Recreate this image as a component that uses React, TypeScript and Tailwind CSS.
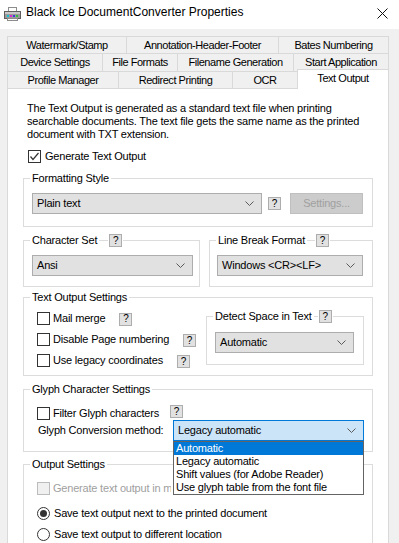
import React from "react";

function Help({ className = "" }: { className?: string }) {
  return (
    <div
      className={`w-[13px] h-[13px] shrink-0 border border-[#adadad] bg-[#e1e1e1] flex items-center justify-center text-[10px] leading-none text-black tracking-normal ${className}`}
    >
      ?
    </div>
  );
}

function Chevron() {
  return (
    <svg width="9" height="5" viewBox="0 0 9 5" className="shrink-0">
      <path d="M0.5 0.5 L4.5 4.5 L8.5 0.5" fill="none" stroke="#5a5a5a" strokeWidth="1" />
    </svg>
  );
}

function Combo({ text, className = "" }: { text: string; className?: string }) {
  return (
    <div
      className={`h-[21px] shrink-0 border border-[#adadad] bg-[#e1e1e1] flex items-center justify-between pl-[4px] pr-[7px] ${className}`}
    >
      <span>{text}</span>
      <Chevron />
    </div>
  );
}

function Check({ checked = false, disabled = false }: { checked?: boolean; disabled?: boolean }) {
  return (
    <div
      className={`w-[13px] h-[13px] shrink-0 border flex items-center justify-center ${
        disabled ? "border-[#bcbcbc] bg-[#f0f0f0]" : "border-[#333333] bg-white"
      }`}
    >
      {checked && (
        <svg width="11" height="11" viewBox="0 0 11 11">
          <path d="M1.5 5.5 L4 8.5 L9.5 2" fill="none" stroke="#333333" strokeWidth="1.2" />
        </svg>
      )}
    </div>
  );
}

function Radio({ selected = false }: { selected?: boolean }) {
  return (
    <div className="w-[13px] h-[13px] shrink-0 rounded-full border border-[#333333] bg-white flex items-center justify-center">
      {selected && <div className="w-[7px] h-[7px] rounded-full bg-[#333333]" />}
    </div>
  );
}

function Legend({ label, helpGap }: { label: string; helpGap?: string }) {
  return (
    <div className="absolute -top-[7px] left-[6px] flex items-center leading-[13px]">
      <span className="bg-white px-[2px]">{label}</span>
      {helpGap && (
        <div className={`bg-white px-[1px] ${helpGap}`}>
          <Help />
        </div>
      )}
    </div>
  );
}

function Tab({ label, className = "" }: { label: string; className?: string }) {
  return (
    <div
      className={`h-full border-l border-t border-[#d9d9d9] bg-[#f0f0f0] flex items-center justify-center whitespace-nowrap ${className}`}
    >
      {label}
    </div>
  );
}

function PrinterIcon() {
  return (
    <svg width="17" height="14" viewBox="0 0 17 14">
      <rect x="4.5" y="0.5" width="8" height="4" fill="#ffffff" stroke="#8c8c8c" />
      <rect x="0.5" y="4.5" width="16" height="7" fill="#9a9a9a" stroke="#5e5e5e" />
      <rect x="1" y="5" width="15" height="2" fill="#c8c8c8" />
      <rect x="3" y="8" width="2" height="2" fill="#17c3d6" />
      <rect x="6" y="8" width="2" height="2" fill="#d62ccf" />
      <rect x="9" y="8" width="2" height="2" fill="#3c3cd8" />
      <rect x="12" y="8" width="2" height="2" fill="#2fbf3a" />
      <rect x="3.5" y="11.5" width="10" height="2" fill="#ffffff" stroke="#8c8c8c" />
    </svg>
  );
}

export default function App() {
  return (
    <div className="w-[399px] h-[543px] overflow-hidden bg-[#f0f0f0] text-[11px] tracking-[-0.2px] text-black font-['Liberation_Sans',Arial,sans-serif] leading-[13px]">
      {/* Title bar */}
      <div className="h-[29px] bg-white flex items-center">
        <div className="ml-[4px] mb-[1px] flex items-center">
          <PrinterIcon />
        </div>
        <div className="ml-[5px] mb-[4px] text-[12px] tracking-normal">
          Black Ice DocumentConverter Properties
        </div>
        <div className="ml-auto mr-[11px] mb-[3px]">
          <svg width="11" height="11" viewBox="0 0 11 11">
            <path d="M0.5 0.5 L10.5 10.5 M10.5 0.5 L0.5 10.5" stroke="#111111" strokeWidth="1" />
          </svg>
        </div>
      </div>

      <div className="pl-[7px] pr-[10px] pt-[7px]">
        {/* Tabs */}
        <div className="w-[382px] tracking-[-0.45px]">
          <div className="flex h-[17px]">
            <Tab label="Watermark/Stamp" className="w-[119px]" />
            <Tab label="Annotation-Header-Footer" className="w-[152px]" />
            <Tab label="Bates Numbering" className="w-[111px] border-r" />
          </div>
          <div className="flex h-[18px]">
            <Tab label="Device Settings" className="w-[95px]" />
            <Tab label="File Formats" className="w-[75px]" />
            <Tab label="Filename Generation" className="w-[116px]" />
            <Tab label="Start Application" className="w-[96px] border-r" />
          </div>
          <div className="flex h-[17px] items-end">
            <Tab label="Profile Manager" className="w-[111px]" />
            <Tab label="Redirect Printing" className="w-[114px]" />
            <Tab label="OCR" className="w-[65px]" />
            <div className="relative z-10 w-[92px] h-[20px] -mb-[1px] self-end border-l border-t border-r border-[#d9d9d9] bg-white flex justify-center pt-[2px]">
              Text Output
            </div>
          </div>
        </div>

        {/* Panel */}
        <div className="w-[382px] h-[470px] bg-white border border-[#d9d9d9] pl-[15px]">
          <p className="mt-[13px] pl-[4px]">
            The Text Output is generated as a standard text file when printing
            <br />
            searchable documents. The text file gets the same name as the printed
            <br />
            document with TXT extension.
          </p>

          <div className="mt-[9px] ml-[5px] flex items-center h-[13px] gap-[4px]">
            <Check checked />
            <span>Generate Text Output</span>
          </div>

          {/* Formatting Style */}
          <div className="relative mt-[15px] w-[350px] h-[49px] border border-[#dcdcdc] pt-[14px] pl-[8px] flex items-start">
            <Legend label="Formatting Style" />
            <Combo text="Plain text" className="w-[230px]" />
            <Help className="ml-[6px] mt-[4px]" />
            <div className="ml-[9px] w-[73px] h-[21px] border border-[#bfbfbf] bg-[#cccccc] text-[#a0a0a0] flex items-center justify-center">
              Settings...
            </div>
          </div>

          {/* Character Set / Line Break */}
          <div className="mt-[13px] flex">
            <div className="relative w-[177px] h-[47px] border border-[#dcdcdc] pt-[14px] pl-[8px]">
              <Legend label="Character Set" helpGap="ml-[9px]" />
              <Combo text="Ansi" className="w-[161px]" />
            </div>
            <div className="relative ml-[9px] w-[164px] h-[47px] border border-[#dcdcdc] pt-[14px] pl-[7px]">
              <Legend label="Line Break Format" helpGap="ml-[8px]" />
              <Combo text="Windows <CR><LF>" className="w-[146px]" />
            </div>
          </div>

          {/* Text Output Settings */}
          <div className="relative mt-[10px] w-[350px] h-[79px] border border-[#dcdcdc] flex items-start">
            <Legend label="Text Output Settings" />
            <div className="pl-[13px] pt-[14px] flex flex-col gap-[8px]">
              <div className="flex items-center h-[13px]">
                <Check />
                <span className="ml-[3px]">Mail merge</span>
                <Help className="ml-[14px] mt-[1px]" />
              </div>
              <div className="flex items-center h-[13px]">
                <Check />
                <span className="ml-[3px]">Disable Page numbering</span>
                <Help className="ml-[14px] mt-[2px]" />
              </div>
              <div className="flex items-center h-[13px]">
                <Check />
                <span className="ml-[3px]">Use legacy coordinates</span>
                <Help className="ml-[14px] mt-[2px]" />
              </div>
            </div>
            <div className="relative ml-auto mr-[8px] mt-[18px] w-[158px] h-[49px] border border-[#dcdcdc] pt-[15px] pl-[8px]">
              <Legend label="Detect Space in Text" helpGap="ml-[4px]" />
              <Combo text="Automatic" className="w-[139px]" />
            </div>
          </div>

          {/* Glyph Character Settings */}
          <div className="relative z-20 mt-[13px] w-[350px] h-[63px] border border-[#dcdcdc]">
            <Legend label="Glyph Character Settings" />
            <div className="pl-[13px] pt-[17px] flex items-center h-[30px]">
              <Check />
              <span className="ml-[3px]">Filter Glyph characters</span>
              <Help className="ml-[11px] -mt-[4px]" />
            </div>
            <div className="flex items-center h-[21px]">
              <span className="pl-[14px]">Glyph Conversion method:</span>
              <div className="relative ml-auto mr-[8px] w-[191px]">
                <div className="h-[21px] border border-[#0078d7] bg-[#cce4f7] flex items-center justify-between pl-[4px] pr-[7px]">
                  <span>Legacy automatic</span>
                  <Chevron />
                </div>
                <div className="absolute left-0 top-full w-[191px] border border-[#646464] bg-white">
                  <div className="h-[13px] bg-[#0078d7] text-white pl-[2px] flex items-center">Automatic</div>
                  <div className="h-[13px] pl-[2px] flex items-center">Legacy automatic</div>
                  <div className="h-[13px] pl-[2px] flex items-center">Shift values (for Adobe Reader)</div>
                  <div className="h-[13px] pl-[2px] flex items-center">Use glyph table from the font file</div>
                </div>
              </div>
            </div>
          </div>

          {/* Output Settings */}
          <div className="relative mt-[12px] w-[350px] h-[120px] border border-[#dcdcdc]">
            <Legend label="Output Settings" />
            <div className="pl-[13px] pt-[17px]">
              <div className="flex items-center h-[13px]">
                <Check disabled />
                <span className="ml-[3px] w-[118px] overflow-hidden text-[#a0a0a0] whitespace-nowrap">
                  Generate text output in multiple files
                </span>
              </div>
              <div className="mt-[12px] flex items-center h-[13px]">
                <Radio selected />
                <span className="ml-[4px]">Save text output next to the printed document</span>
              </div>
              <div className="mt-[8px] flex items-center h-[13px]">
                <Radio />
                <span className="ml-[4px]">Save text output to different location</span>
              </div>
            </div>
          </div>
        </div>
      </div>
    </div>
  );
}
